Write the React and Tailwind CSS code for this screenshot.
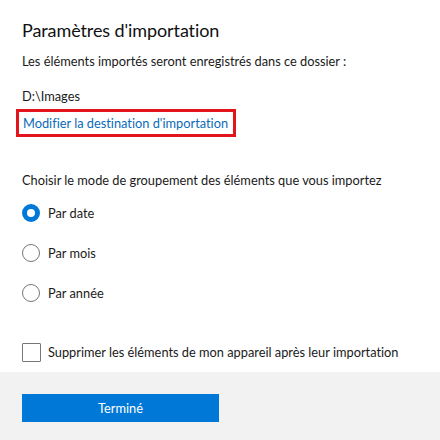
export default function App() {
  const font = { fontFamily: 'Lato, "Open Sans", sans-serif' };
  return (
    <div className="w-[440px] h-[440px] bg-white flex flex-col text-[#1a1a1a] [font-variant-ligatures:none]" style={font}>
      <div className="flex flex-col pl-[22px] pt-[16px] flex-1">
        <h1 className="text-[18px] leading-[28px] font-normal text-[#111] tracking-[-0.1px]">Paramètres d'importation</h1>
        <p className="mt-[7px] text-[12.8px] leading-[20px]">Les éléments importés seront enregistrés dans ce dossier :</p>
        <p className="mt-[15px] text-[12.8px] leading-[20px]">D:\Images</p>
        <div className="mt-[3px] -ml-[6px] w-[220px] h-[28px] border-[3px] border-[#e2141c] flex items-center pl-[4px] whitespace-nowrap">
          <span className="text-[12.8px] leading-[20px] text-[#0a6bb8]">Modifier la destination d'importation</span>
        </div>
        <p className="mt-[33px] text-[12.8px] leading-[20px]">Choisir le mode de groupement des éléments que vous importez</p>
        <div className="mt-[3px] flex flex-col">
          {[
            ['Par date', true],
            ['Par mois', false],
            ['Par année', false],
          ].map(([label, checked]) => (
            <div key={label} className="h-[40px] flex items-center">
              {checked ? (
                <span className="w-[18px] h-[18px] rounded-full border-[5px] border-[#0078d7] bg-white"></span>
              ) : (
                <span className="w-[18px] h-[18px] rounded-full border-[1.5px] border-[#777] bg-white"></span>
              )}
              <span className="ml-[8px] text-[12.8px] leading-[20px]">{label}</span>
            </div>
          ))}
        </div>
        <div className="mt-[29px] h-[20px] flex items-center">
          <span className="w-[19px] h-[19px] border-[1.5px] border-[#777] rounded-[1px] bg-white"></span>
          <span className="ml-[7px] text-[12.8px] leading-[20px] whitespace-nowrap">Supprimer les éléments de mon appareil après leur importation</span>
        </div>
      </div>
      <div className="h-[68px] bg-[#f2f2f2] pl-[22px] pt-[22px]">
        <button className="w-[197px] h-[28px] bg-[#0078d7] text-white text-[12.8px] leading-[20px]">Terminé</button>
      </div>
    </div>
  );
}
